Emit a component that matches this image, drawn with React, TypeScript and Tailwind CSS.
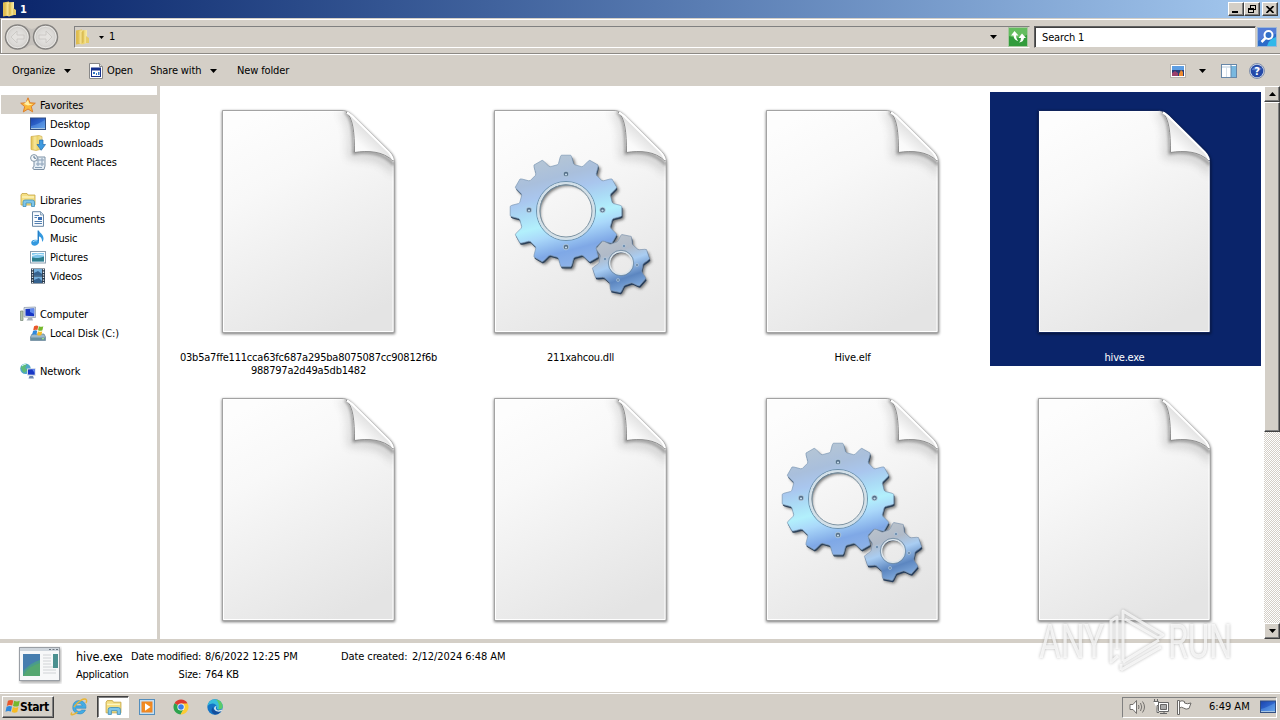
import type { ReactNode } from 'react';

const gearPath = (cx: number, cy: number, teeth: number, outer: number, root: number, offset: number) => {
  const step = (Math.PI * 2) / teeth;
  const points: string[] = [];
  for (let i = 0; i < teeth; i++) {
    const a = (offset * Math.PI) / 180 + i * step;
    [[-0.35, root], [-0.3, root + 1], [-0.2, outer - 1.5], [-0.16, outer], [0.16, outer], [0.2, outer - 1.5], [0.3, root + 1], [0.35, root]].forEach(([t, r]) => {
      points.push(`${(cx + Math.cos(a + t * step) * r).toFixed(1)} ${(cy + Math.sin(a + t * step) * r).toFixed(1)}`);
    });
  }
  return `M${points.join('L')}Z`;
};

const hole = (cx: number, cy: number, r: number) =>
  `M${cx - r} ${cy}a${r} ${r} 0 1 0 ${r * 2} 0a${r} ${r} 0 1 0 ${-r * 2} 0Z`;

const bigGear = gearPath(86, 111, 12, 56, 47, -90) + hole(86, 111, 28);
const smallGear = gearPath(141, 163.5, 6, 29, 22, -79) + hole(141, 163, 12);

const files = [
  { name: ['03b5a7ffe111cca63fc687a295ba8075087cc90812f6b', '988797a2d49a5db1482'], gears: false, selected: false },
  { name: ['211xahcou.dll'], gears: true, selected: false },
  { name: ['Hive.elf'], gears: false, selected: false },
  { name: ['hive.exe'], gears: false, selected: true },
  { name: [], gears: false, selected: false },
  { name: [], gears: false, selected: false },
  { name: [], gears: true, selected: false },
  { name: [], gears: false, selected: false },
];

const Defs = () => (
  <svg className="absolute h-0 w-0">
    <defs>
      <linearGradient id="paper" x1="0.25" y1="0" x2="0.65" y2="1">
        <stop offset="0" stopColor="#fdfdfd" />
        <stop offset="0.3" stopColor="#f8f8f8" />
        <stop offset="1" stopColor="#e4e4e4" />
      </linearGradient>
      <linearGradient id="curl" x1="0" y1="1" x2="0.6" y2="0.3">
        <stop offset="0" stopColor="#ffffff" />
        <stop offset="0.5" stopColor="#fafafa" />
        <stop offset="1" stopColor="#d4d4d4" />
      </linearGradient>
      <linearGradient id="metal" x1="0.35" y1="0" x2="0.62" y2="1">
        <stop offset="0" stopColor="#b6c6d4" />
        <stop offset="0.2" stopColor="#a9bfdc" />
        <stop offset="0.33" stopColor="#a9c6ee" />
        <stop offset="0.46" stopColor="#abdcf6" />
        <stop offset="0.58" stopColor="#b2f0fc" />
        <stop offset="0.68" stopColor="#aad8fa" />
        <stop offset="0.84" stopColor="#7fa8e6" />
        <stop offset="1" stopColor="#8fb4e8" />
      </linearGradient>
      <linearGradient id="metal2" x1="0.3" y1="0" x2="0.65" y2="1">
        <stop offset="0" stopColor="#bcc4cc" />
        <stop offset="0.3" stopColor="#b0bac8" />
        <stop offset="0.5" stopColor="#a9cdf2" />
        <stop offset="0.75" stopColor="#5c86c0" />
        <stop offset="1" stopColor="#8ab4e4" />
      </linearGradient>
      <linearGradient id="folder" x1="0" x2="1">
        <stop offset="0" stopColor="#e0bd4c" />
        <stop offset="0.35" stopColor="#f7e79a" />
        <stop offset="0.6" stopColor="#ecd36b" />
        <stop offset="1" stopColor="#f8ecac" />
      </linearGradient>
      <linearGradient id="screen" x1="0" x2="1" y2="1">
        <stop offset="0" stopColor="#1b43ac" />
        <stop offset="0.5" stopColor="#2e65cc" />
        <stop offset="1" stopColor="#69a7ec" />
      </linearGradient>
      <radialGradient id="orb">
        <stop offset="0" stopColor="#e9e8e6" />
        <stop offset="0.7" stopColor="#dad8d5" />
        <stop offset="1" stopColor="#c3c1bd" />
      </radialGradient>
      <filter id="soft" x="-20%" y="-20%" width="140%" height="140%">
        <feGaussianBlur stdDeviation="1.6" />
      </filter>
      <filter id="softer" x="-30%" y="-30%" width="160%" height="160%">
        <feGaussianBlur stdDeviation="4" />
      </filter>
      <clipPath id="page-clip">
        <path d="M14.500 10.500H133C139 10.500 142 13 146 17L180 50C184 54 186 57 186 64V232.500H14.500Z" />
      </clipPath>
    </defs>
  </svg>
);

const FileIcon = ({ gears, selected }: { gears: boolean; selected: boolean }) => (
  <svg width="200" height="250" viewBox="0 0 200 250" className="-ml-[3px] block shrink-0">
    <path d="M14 11H133C139 11 142 13 146 17L180 50C184 54 187 57 187 64V234H14Z" fill="#000" opacity="0.55" filter="url(#soft)" />
    <path d="M14.500 10.500H133C139 10.500 142 13 146 17L180 50C184 54 186 57 186 64V232.500H14.500Z" fill="url(#paper)" stroke={selected ? '#10245c' : '#a3a3a3'} />
    <path d="M15.500 11.500H133C138 11.500 141 14 145 18L179 51C183 55 185 58 185 64V231.500H15.500Z" fill="none" stroke="#fff" />
    <g clipPath="url(#page-clip)">
      <path d="M136 12C142 18 145 28 145 54C162 52 176 54 186 66V76C174 58 160 60 140 58C141 34 140 20 130 12Z" fill="#666" opacity="0.3" filter="url(#softer)" />
      <path d="M137 12C144 17 146 30 146 53C160 51 175 52 186 65" fill="none" stroke="#555" strokeWidth="2.500" opacity="0.65" filter="url(#soft)" />
    </g>
    <path d="M137 11.500C144 17 146 30 146 52.500C160 50.500 175 51 185.500 62C184 56 183 54 179 50L146 17C142 13 140 12 137 11.500Z" fill="url(#curl)" />
    <path d="M138 12C145 18 146.500 32 146.500 52.500C160 50.500 175 51 185 61" fill="none" stroke="#8c8c8c" />
    <path d="M139 12.500C142 14 144 16 147 19L178 49.500C182 53 184 56 185 60" fill="none" stroke="#fff" strokeWidth="2" />
    {gears && (
      <g fillRule="evenodd">
        <path d={bigGear} fill="#333" opacity="0.65" transform="translate(2.500 3)" filter="url(#soft)" />
        <path d={bigGear} fill="#2b4058" transform="translate(0.700 1.800)" />
        <path d={bigGear} fill="url(#metal)" stroke="#7e9ab4" strokeWidth="0.700" />
        <circle cx="86" cy="111" r="29.500" fill="none" stroke="#6d91ab" strokeWidth="1" />
        <circle cx="86" cy="111" r="27.700" fill="none" stroke="#d3e0e8" strokeWidth="2.500" />
        <circle cx="86" cy="111" r="26" fill="none" stroke="#7890a0" strokeWidth="1" />
        {[[86, 74], [122.5, 110], [86, 147], [49, 110]].map(([x, y]) => (
          <g key={`${x}-${y}`}>
            <circle cx={x} cy={y} r="2.800" fill="#56708a" stroke="#c2d8ea" strokeWidth="0.700" />
            <circle cx={x} cy={y + 0.5} r="1.100" fill="#c7dceb" />
          </g>
        ))}
        <path d={smallGear} fill="#333" opacity="0.65" transform="translate(2 3)" filter="url(#soft)" />
        <path d={smallGear} fill="#243c5b" transform="translate(0.700 1.800)" />
        <path d={smallGear} fill="url(#metal2)" stroke="#7e94ae" strokeWidth="0.700" />
        <circle cx="141" cy="163" r="11.500" fill="none" stroke="#dbe4eb" strokeWidth="1.800" />
        <circle cx="141" cy="163" r="12.700" fill="none" stroke="#5f7c97" strokeWidth="0.700" />
        {[[144, 146], [157, 165], [138, 180], [125, 159]].map(([x, y]) => (
          <circle key={`${x}-${y}`} cx={x} cy={y} r="1.500" fill="#6486a8" stroke="#cadcec" strokeWidth="0.500" />
        ))}
      </g>
    )}
  </svg>
);

const Icon = ({ children, size = 16 }: { children: ReactNode; size?: number }) => (
  <svg width={size} height={size} viewBox="0 0 16 16" className="block shrink-0">
    {children}
  </svg>
);

const FolderIcon = ({ size }: { size?: number }) => (
  <Icon size={size}>
    <path d="M1 1.500 7 .5V14.500L1 15.500Z" fill="#dfbd51" />
    <path d="M3 1.500 12 1V14L7 15.500 3 14Z" fill="url(#folder)" />
    <path d="M6.500 3 8.500 1.500V13L6.500 15.500Z" fill="#cda83a" opacity=".6" />
    <path d="M11 7 14 9V14H11Z" fill="#e6cc6a" />
  </Icon>
);

const StarIcon = () => (
  <Icon>
    <path d="M8 .8 10 5.800 15.300 6.200 11.300 9.600 12.700 14.900 8 12 3.300 14.900 4.700 9.600.7 6.200 6 5.800Z" fill="#fbb93a" stroke="#dd7f2b" />
    <path d="M8 3 9.200 6.800 13 7.200 8 8.500 4 7Z" fill="#fff0a5" />
  </Icon>
);

const DesktopIcon = () => (
  <Icon>
    <rect x=".5" y="2" width="15" height="11.500" fill="url(#screen)" stroke="#314f83" />
    <path d="M1 10C6 9 11 6 15 4V12H1Z" fill="#6ba8ec" opacity=".45" />
    <path d="M1 12.500H15" stroke="#a7c6e2" />
  </Icon>
);

const DownloadsIcon = () => (
  <Icon>
    <path d="M1 1.500 9 .5 12 1.500V14L6 15.500 1 14.500Z" fill="url(#folder)" stroke="#cfae4c" strokeWidth=".7" />
    <path d="M9.500 5H13V9.500H15.500L11.200 15.300 7 9.500H9.500Z" fill="#3e9ae0" stroke="#246bae" strokeWidth=".7" />
  </Icon>
);

const RecentIcon = () => (
  <Icon>
    <path d="M4 3H15V12L14 15.500H4C2.500 15.500 2.500 12.500 4 12.500Z" fill="#e5edf4" stroke="#7d91a5" />
    <path d="M7 5H9V7H7ZM11 5H13V7H11ZM7 9H9V11H7ZM11 9H13V11H11ZM5 13.500H12" fill="#fff" stroke="#6e8ba7" strokeWidth=".8" />
    <circle cx="4" cy="4" r="3.400" fill="#f6f9fb" stroke="#8296a8" />
    <path d="M4 2V4L6 4.300" fill="none" stroke="#54718c" />
  </Icon>
);

const LibrariesIcon = ({ size }: { size?: number }) => (
  <Icon size={size}>
    <path d="M1 3 2 1.500H7L8 3H15V13H1Z" fill="#f5df83" stroke="#c4a445" strokeWidth=".8" />
    <path d="M2 5H14" stroke="#fffbd0" />
    <path d="M3 14.500V10Q3 8 5 8H12.500Q14.500 8 14.500 10V14.500H11.500V11H6V14.500Z" fill="#7fc6ea" stroke="#428fb8" strokeWidth=".8" />
  </Icon>
);

const DocumentsIcon = () => (
  <Icon>
    <path d="M2.500.7H10.500L13.500 3.700V15.300H2.500Z" fill="#f8fbfe" stroke="#6886a4" />
    <path d="M10.500.7V4H13.500" fill="#cdddea" stroke="#6886a4" strokeWidth=".7" />
    <path d="M4.500 4.500H9M4.500 6.500H7M8 8H12M4.500 10.500H12M4.500 12.500H12" stroke="#537fb0" />
    <rect x="8" y="6" width="4" height="3" fill="#386eb4" />
  </Icon>
);

const MusicIcon = () => (
  <Icon>
    <path d="M7.500.5H9C9.500 3 13.500 4 13.500 8.500 13.500 10 13 11 12 12 12.500 8 10 6.500 9 6.500V12.500C8 16.500 1.200 16.800 1.200 12.800 1.200 9.700 5 9.200 7.500 10.200Z" fill="#3499df" />
    <path d="M3 12C4 10.500 6 10.500 7 11" fill="none" stroke="#a5dcfa" />
    <path d="M8.500 1V11" stroke="#236bb6" strokeWidth=".6" />
  </Icon>
);

const PicturesIcon = () => (
  <Icon>
    <rect x=".5" y="2.500" width="15" height="11.500" fill="#fff" stroke="#8c9eae" />
    <rect x="2" y="4" width="12" height="8.500" fill="#81c6eb" />
    <path d="M2 8.500C5 8.500 7 10 14 7.500V12.500H2Z" fill="#2e7f8d" />
    <path d="M2 6.500Q7 4 14 6" stroke="#e8f7ff" fill="none" />
  </Icon>
);

const VideosIcon = () => (
  <Icon>
    <rect x="1" y=".5" width="14" height="15" fill="#2a3b4d" />
    <path d="M4 1H12V7.500H4ZM4 8.500H12V15H4Z" fill="#73aedc" />
    <path d="M4 5 8 3 12 6V7.500H4ZM4 12 9 10 12 13V15H4Z" fill="#35628f" />
    <path d="M2.500 1V15M13.500 1V15" stroke="#e7ebef" strokeWidth="1.300" strokeDasharray="1.300 1.300" />
  </Icon>
);

const ComputerIcon = () => (
  <Icon>
    <path d="M.5 5H3V14.500H.5Z" fill="#b4c5aa" stroke="#768877" strokeWidth=".7" />
    <path d="M4 1.500 15.500 1V11.500L4 11Z" fill="#d9e0e8" stroke="#8795a9" strokeWidth=".7" />
    <path d="M5.500 3 14.200 2.500V10.200L5.500 9.800Z" fill="#1736c5" />
    <path d="M10 2.700 14.200 2.500V8L10 6Z" fill="#5e88ee" />
    <path d="M8.500 11.500H12L13 14.500H6.500Z" fill="#a7b1bd" />
  </Icon>
);

const WindowsFlag = () => (
  <>
    <path d="M3.500 1.500Q6 0 8.300 1.200L7.300 5.700Q5 4.700 2.500 6Z" fill="#e8582b" />
    <path d="M9 1.500Q11.500 2.700 14 1.500L13 6Q10.500 7.200 8 6Z" fill="#75b82c" />
    <path d="M2.300 6.800Q4.700 5.500 7.100 6.600L6.100 11Q3.700 10 1.300 11.300Z" fill="#2f89dc" />
    <path d="M7.900 7Q10.400 8.200 12.800 7L11.800 11.400Q9.400 12.600 6.900 11.400Z" fill="#f7bb22" />
  </>
);

const DiskIcon = () => (
  <Icon>
    <path d="M2 9H14L15.500 12V15.500H.5V12Z" fill="#9db8c9" stroke="#5f7e92" strokeWidth=".7" />
    <path d="M1 12.500H15V15H1Z" fill="#68909f" />
    <path d="M12 13.700H14" stroke="#a9f28b" />
    <g transform="translate(1 0) scale(.88)"><WindowsFlag /></g>
  </Icon>
);

const NetworkIcon = () => (
  <Icon>
    <circle cx="5.500" cy="5.800" r="5.300" fill="#4fa5c9" />
    <path d="M1 4Q4 0 7 1.500L5 5 8 7 4 10Q2 8 1 5Z" fill="#5dbb78" />
    <path d="M2 3Q4 1 6 1" stroke="#d7f8fa" fill="none" />
    <path d="M7 5.500 15.500 5V13L7 12.500Z" fill="#d0d8e6" />
    <path d="M8 6.500 14.700 6V11.700L8 11.500Z" fill="#1938c6" />
    <path d="M12 6.200 14.700 6V10Z" fill="#668cef" />
    <path d="M9.500 13H13L14 15.500H8.500Z" fill="#6f88b2" />
  </Icon>
);

const nav = [
  { label: 'Favorites', icon: <StarIcon />, root: true, active: true },
  { label: 'Desktop', icon: <DesktopIcon /> },
  { label: 'Downloads', icon: <DownloadsIcon /> },
  { label: 'Recent Places', icon: <RecentIcon /> },
  null,
  { label: 'Libraries', icon: <LibrariesIcon />, root: true },
  { label: 'Documents', icon: <DocumentsIcon /> },
  { label: 'Music', icon: <MusicIcon /> },
  { label: 'Pictures', icon: <PicturesIcon /> },
  { label: 'Videos', icon: <VideosIcon /> },
  null,
  { label: 'Computer', icon: <ComputerIcon />, root: true },
  { label: 'Local Disk (C:)', icon: <DiskIcon /> },
  null,
  { label: 'Network', icon: <NetworkIcon />, root: true },
];

const Arrow = ({ small, up }: { small?: boolean; up?: boolean }) => (
  <svg width={small ? 5 : 7} height={small ? 3 : 4} viewBox="0 0 7 4" className="block shrink-0">
    <path d={up ? 'M0 4H7L3.500 0Z' : 'M0 0H7L3.500 4Z'} fill="#000" />
  </svg>
);

const raised = 'border border-t-white border-l-white border-r-[#404040] border-b-[#404040] bg-[#d4cfc7] shadow-[inset_-1px_-1px_0_#808080]';

const TitleBar = () => (
  <div className="flex h-[18px] items-center bg-gradient-to-r from-[#0a246a] to-[#a6caf0] pl-[2px] pr-[2px]">
    <FolderIcon />
    <span className="ml-[2px] pt-px text-[11px] font-bold leading-[17px] text-white">1</span>
    <div className="ml-auto flex">
      <button className={`flex h-[14px] w-4 items-end pb-[2px] pl-[3px] ${raised}`}>
        <span className="block h-[2px] w-[6px] bg-black" />
      </button>
      <button className={`flex h-[14px] w-4 items-center justify-center ${raised}`}>
        <svg width="10" height="10" viewBox="0 0 10 10">
          <path d="M3 1H9V2H3ZM3 2H4V4H3ZM8 2H9V6H7V5H8ZM1 4H7V6H1ZM1 6H2V8H1ZM6 6H7V8H6ZM1 8H7V9H1Z" fill="#000" />
        </svg>
      </button>
      <button className={`ml-[2px] flex h-[14px] w-4 items-center justify-center ${raised}`}>
        <svg width="8" height="7" viewBox="0 0 8 7">
          <path d="M.5 0 7.500 7M7.500 0 .5 7" stroke="#000" strokeWidth="1.700" />
        </svg>
      </button>
    </div>
  </div>
);

const NavButtons = () => (
  <svg width="56" height="28" viewBox="0 0 56 28" className="block shrink-0">
    <path d="M14 3H42V25H14Z" fill="#c5c1bc" />
    <path d="M22 3Q28 9 34 3M22 25Q28 19 34 25" fill="#d4cfc7" />
    {[13.5, 41.5].map((x) => (
      <g key={x}>
        <circle cx={x} cy="14" r="12" fill="url(#orb)" stroke="#858380" strokeWidth="1.500" />
        <circle cx={x} cy="14" r="10.700" fill="none" stroke="#f2f1ef" strokeWidth=".8" />
      </g>
    ))}
    <path d="M7 14 13 8V12H20V16H13V20Z" fill="#e4e2df" stroke="#c6c4c0" strokeWidth=".8" />
    <path d="M48 14 42 8V12H35V16H42V20Z" fill="#e4e2df" stroke="#c6c4c0" strokeWidth=".8" />
  </svg>
);

const AddressBar = () => (
  <div className="flex h-[36px] items-center border-b border-l border-t border-[#8c8984] border-t-[#d4cfc7] pl-[3px] pr-[2px] pt-[2px] shadow-[inset_1px_1px_0_#fff]">
    <NavButtons />
    <div className="ml-[14px] flex h-[22px] flex-1 items-center border border-[#808080] border-b-white border-r-transparent">
      <FolderIcon />
      <span className="ml-[8px]"><Arrow small /></span>
      <span className="ml-[5px]">1</span>
      <span className="ml-auto mr-[11px]"><Arrow /></span>
      <svg width="20" height="20" viewBox="0 0 20 20" className="block shrink-0">
        <rect x=".5" y=".5" width="19" height="19" fill="#329c3c" stroke="#a8c7a0" />
        <path d="M1 1H19V8Q10 13 1 9Z" fill="#64bd5f" />
        <path d="M6.500 4 3 8.500H5.500Q6 13 10 14 8 11.500 8 8.500H10.500ZM14 6.500 10.500 11H13Q13 14 11 15.500 15.500 15 16 11H18Z" fill="#fff" />
      </svg>
      <span className="w-[1px]" />
    </div>
    <div className="ml-[4px] flex h-[22px] w-[222px] items-center border border-[#d4cfc7] border-l-[#606060] border-t-[#606060] bg-white pl-[7px] pt-px tracking-[-0.15px] shadow-[inset_1px_1px_0_#404040]">Search 1</div>
    <svg width="20" height="20" viewBox="0 0 20 20" className="ml-[1px] mr-px block shrink-0">
      <rect x=".5" y=".5" width="19" height="19" fill="#2c6cc9" stroke="#9cb7d7" />
      <path d="M1 1H19V7Q10 8 1 14Z" fill="#527cd6" />
      <path d="M10 19Q12 12 19 10V19Z" fill="#32b8e9" />
      <circle cx="11.500" cy="8" r="4" fill="#316fc8" stroke="#fff" strokeWidth="2" />
      <path d="M8.500 11 4.500 15" stroke="#fff" strokeWidth="2.500" />
    </svg>
  </div>
);

const Toolbar = () => (
  <div className="flex h-[32px] items-center border-t border-white pl-[12px] pr-[15px] tracking-[-0.14px]">
    <span className="w-[52px]">Organize</span>
    <Arrow />
    <svg width="16" height="16" viewBox="0 0 16 16" className="ml-[17px] mr-[3px] block shrink-0">
      <path d="M1.500.5H11.500L14.500 3.500V15.500H1.500Z" fill="#fff" stroke="#888" />
      <path d="M11.500.5V3.500H14.500" fill="#ddd" stroke="#888" />
      <rect x="3.500" y="5" width="9" height="8.500" fill="#fff" stroke="#16318c" />
      <path d="M3 5H13V7.500H3Z" fill="#16318c" />
      <path d="M5 9H7V11H5ZM8 10H9V12H8ZM10 9H11.500V12H10Z" fill="#3474c4" />
    </svg>
    <span className="w-[43px]">Open</span>
    <span className="w-[60px]">Share with</span>
    <Arrow />
    <span className="ml-[20px]">New folder</span>
    <svg width="16" height="14" viewBox="0 0 16 14" className="ml-auto mr-[13px] block">
      <rect x=".5" y=".5" width="15" height="13" fill="#fff" stroke="#b4b0ab" />
      <rect x="2" y="2" width="12" height="10" fill="#283c76" />
      <path d="M2 2H14V6H2Z" fill="#5d9ee3" />
      <path d="M2 12V9L5 7 8 9V12Z" fill="#9b3f6c" />
      <path d="M9 12V10L11 6 13 8V12Z" fill="#ed8a30" />
    </svg>
    <Arrow />
    <svg width="16" height="14" viewBox="0 0 16 14" className="ml-[15px] block">
      <rect x=".5" y=".5" width="15" height="13" fill="#fff" stroke="#6787a8" />
      <path d="M1 3H15" stroke="#b4c9db" />
      <rect x="10" y="2" width="5" height="11" fill="#79b8df" />
      <path d="M5.500 3V13" stroke="#d5e0e9" />
      <path d="M10 1V13" stroke="#6088ad" />
    </svg>
    <svg width="16" height="16" viewBox="0 0 16 16" className="ml-[12px] block">
      <circle cx="8" cy="8" r="7.500" fill="#cfd8e8" stroke="#8290ac" />
      <circle cx="8" cy="8" r="6.300" fill="#2449a8" />
      <path d="M3 6Q8 1 13 6 10 8 3 7Z" fill="#7191d5" opacity=".7" />
      <text x="8" y="12" textAnchor="middle" fontSize="11" fontWeight="bold" fill="#fff">?</text>
    </svg>
  </div>
);

const Sidebar = () => (
  <div className="w-[160px] shrink-0 border-r-[3px] border-[#d4cfc7] pl-px pt-[9px]">
    {nav.map((item, index) =>
      item ? (
        <div key={item.label} className={`flex h-[19px] items-center gap-[4px] ${item.root ? 'pl-[19px]' : 'pl-[29px]'} ${item.active ? 'bg-[#d4cfc7]' : ''}`}>
          {item.icon}
          <span className="whitespace-nowrap pt-[2px] tracking-[-0.15px]">{item.label}</span>
        </div>
      ) : (
        <div key={index} className="h-[19px]" />
      )
    )}
  </div>
);

const ScrollBar = () => (
  <div className="flex w-4 shrink-0 flex-col bg-[repeating-conic-gradient(#d4cfc7_0%_25%,#fff_0%_50%)] bg-[length:2px_2px]">
    <div className={`flex h-4 items-center justify-center ${raised}`}><Arrow up /></div>
    <div className={`h-[330px] ${raised}`} />
    <div className={`mt-auto flex h-4 items-center justify-center ${raised}`}><Arrow /></div>
  </div>
);

const FileGrid = () => (
  <div className="grid flex-1 grid-cols-[repeat(4,271px)] content-start gap-x-px gap-y-[14px] overflow-hidden pl-[14px] pt-[6px]">
    {files.map((file, index) => (
      <div key={index} className={`flex h-[274px] flex-col items-center pt-[8px] ${file.selected ? 'bg-[#0a246a] text-white' : ''}`}>
        <FileIcon gears={file.gears} selected={file.selected} />
        <div className="-ml-[2px] mt-px whitespace-nowrap text-center leading-[13px] tracking-[-0.21px]">
          {file.name.map((line) => <div key={line}>{line}</div>)}
        </div>
      </div>
    ))}
  </div>
);

const DetailsPane = () => (
  <div className="flex h-[49px] border-t-[4px] border-[#d4cfc7] bg-white">
    <svg width="44" height="38" viewBox="0 0 44 38" className="ml-[18px] mt-[3px] block shrink-0">
      <rect x="2" y="2" width="41" height="35" fill="#777" opacity=".6" filter="url(#soft)" />
      <rect x="1.500" y="1.500" width="40" height="33" fill="#f7f8f9" stroke="#9a9fa5" />
      <path d="M2 2H41V5H2Z" fill="#cfd6dd" />
      <path d="M31 3.500H33M34.500 3.500H36.500M38 3.500H40" stroke="#6d7781" />
      <rect x="5" y="8" width="17" height="22" fill="#4a9b8c" />
      <path d="M5 8H22V14Q14 16 5 25Z" fill="#477eaf" />
      <path d="M5 30Q10 20 22 17V30Z" fill="#55a770" />
      <path d="M25 9H33M25 12H33M25 15H33M25 18H33M25 21H38M25 24H38M25 27H38" stroke="#d0d3d6" />
      <rect x="35" y="8" width="5" height="14" fill="#4b9090" />
    </svg>
    <div className="ml-[14px] w-[55px] whitespace-nowrap pt-[5px] leading-[18px]">
      <div className="text-[12.500px] tracking-[-0.1px]">hive.exe</div>
      <div>Application</div>
    </div>
    <div className="grid grid-cols-[70px_140px_67px_100px] content-start gap-x-[4px] whitespace-nowrap pt-[5px] leading-[18px]">
      <span className="text-right">Date modified:</span>
      <span className="tracking-[-0.06px]">8/6/2022 12:25 PM</span>
      <span className="-ml-[8px] tracking-[-0.1px]">Date created:</span>
      <span className="-ml-[8px] tracking-[-0.06px]">2/12/2024 6:48 AM</span>
      <span className="text-right">Size:</span>
      <span>764 KB</span>
    </div>
  </div>
);

const Taskbar = () => (
  <div className="flex h-[28px] items-center border-t border-[#d4cfc7] bg-[#d4cfc7] pl-[2px] pr-[3px] shadow-[inset_0_1px_0_#fff]">
    <button className={`mt-px flex h-[22px] w-[52px] items-center pl-px text-[12px] font-bold ${raised}`}>
      <Icon size={18}><g transform="translate(0 1)"><WindowsFlag /></g></Icon>
      <span className="-ml-[2px] tracking-[-0.4px]">Start</span>
    </button>
    <svg width="18" height="18" viewBox="0 0 18 18" className="ml-[16px] block">
      <path d="M9 2.500A6.700 6.700 0 1 0 15.500 12H11.700A3.300 3.300 0 0 1 5.700 10.300H16A6.700 6.700 0 0 0 9 2.500ZM5.800 7.800A3.300 3.300 0 0 1 12.200 7.800Z" fill="#42ace5" stroke="#277fb9" strokeWidth=".5" />
      <path d="M2 14.500C-1 18 4 17 7.500 14M4 9C8 3 15-1 16.500 2 17 3 16.500 4 16 5" stroke="#e9b534" strokeWidth="1.400" fill="none" />
    </svg>
    <div className="ml-[9px] mt-px flex h-[22px] w-8 items-center justify-center border border-[#404040] border-b-white border-r-white bg-white shadow-[inset_1px_1px_0_#808080]">
      <LibrariesIcon size={17} />
    </div>
    <svg width="16" height="16" viewBox="0 0 16 16" className="ml-[10px] block">
      <rect x=".5" y=".5" width="15" height="15" fill="#c4dff2" stroke="#538ebd" />
      <rect x="2.500" y="2.500" width="11" height="11" fill="#ed8424" />
      <circle cx="8" cy="8" r="5" fill="#f28c20" />
      <path d="M6 4.300 11.500 8 6 11.700Z" fill="#fff" />
    </svg>
    <svg width="16" height="16" viewBox="0 0 16 16" className="ml-[18px] block">
      <path d="M8 8 1.500 4.200A7.500 7.500 0 0 1 14.500 4.200Z" fill="#de3b2f" />
      <path d="M8 8 1.500 4.200A7.500 7.500 0 0 0 7.500 15.500L11 9.700Z" fill="#2da34d" />
      <path d="M8 4.500H14.600A7.500 7.500 0 0 1 7.500 15.500L11 9.500Z" fill="#fccc34" />
      <circle cx="8" cy="8" r="3.600" fill="#fff" />
      <circle cx="8" cy="8" r="2.800" fill="#3b7ee8" />
    </svg>
    <svg width="16" height="16" viewBox="0 0 16 16" className="ml-[18px] block">
      <circle cx="8" cy="8" r="7.700" fill="#1475c6" />
      <path d="M.5 7Q2 0 8 .3 15 1 15.700 7.500 15.500 10.500 11.500 10.500 9 10 10 8 9 4.500 5.500 4.500 2 4.500.5 7Z" fill="#38bddb" />
      <path d="M9 .5Q15 1 15.700 7.500 15.500 10.500 11.500 10.500 13 4 9 .5Z" fill="#5bcb69" />
      <path d="M6 8Q6 13.500 14.500 12 11 16 7 15.300 2.500 12 6 8Z" fill="#144f9d" />
      <path d="M9.500 7Q7.500 10 11 11.500L15 10.500V12Q9 14 7 10 7 7 9.500 7Z" fill="#d4e4ec" />
    </svg>
    <div className="ml-auto mt-px flex h-[21px] w-[155px] items-center border border-[#808080] border-b-white border-r-white pl-[6px]">
      <svg width="17" height="16" viewBox="0 0 17 16" className="block" fill="none" stroke="#73706d">
        <path d="M1 5.500H4L7.500 1.500V14.500L4 10.500H1Z" fill="#fff" />
        <path d="M9.500 6Q10.500 8 9.500 10M11.500 4Q14 8 11.500 12M13.500 2.500Q17.500 8 13.500 13.500" />
      </svg>
      <svg width="16" height="16" viewBox="0 0 16 16" className="ml-[7px] block" stroke="#666" fill="#fff">
        <path d="M5.500 3.500H15.500V12.500H5.500Z" /><path d="M7.500 5.500H13.500V10.500H7.500Z" fill="#aaa" />
        <path d="M7 14.500H14M11 12.500V14.500M.5 2.500H5.500V6.500H4V13.500H6" /><path d="M1.500 0V3M4.500 0V3" />
      </svg>
      <svg width="16" height="16" viewBox="0 0 16 16" className="ml-[7px] block" stroke="#6b6966" fill="#fff">
        <path d="M1.500 1.500H3.500V15.500H1.500Z" />
        <path d="M3.500 2.500Q6 1 8.500 2.500V4Q11 5.500 15 4L13 9.500Q10 11 7.500 9 5.500 7.500 3.500 9Z" />
      </svg>
      <span className="ml-[17px] w-[42px] whitespace-nowrap tracking-[0px]">6:49 AM</span>
      <span className="ml-auto"><DesktopIcon /></span>
    </div>
  </div>
);

const Watermark = () => (
  <svg width="220" height="84" viewBox="0 0 220 84" className="pointer-events-none absolute left-[1030px] top-[604px] overflow-visible">
    {['#777', '#fff'].map((color, layer) => (
      <g key={color} opacity={layer ? 0.75 : 0.5} filter={layer ? undefined : 'url(#soft)'}>
        <text x="9" y="54" fontFamily="Roboto" fontSize="48" textLength="65" lengthAdjust="spacingAndGlyphs" fill={color}>ANY</text>
        <text x="138" y="54" fontFamily="Roboto" fontSize="48" textLength="64" lengthAdjust="spacingAndGlyphs" fill={color}>RUN</text>
        <path d="M88 52 81 58V17L87 13V45M93 57V7L133 31 128 34 95 15M93 58 129 36M91 66 131 43M91 60V66" fill="none" stroke={color} strokeWidth="3" strokeLinejoin="round" />
      </g>
    ))}
  </svg>
);

const App = () => (
  <div className="relative flex h-[720px] w-[1280px] flex-col overflow-hidden bg-[#d4cfc7] font-['DejaVu_Sans_Condensed','DejaVu_Sans',sans-serif] text-[11px] leading-[14px] tracking-[-0.25px] text-black">
    <Defs />
    <TitleBar />
    <AddressBar />
    <Toolbar />
    <div className="flex h-[553px] bg-white">
      <Sidebar />
      <FileGrid />
      <ScrollBar />
    </div>
    <DetailsPane />
    <div className="h-[4px] bg-white" />
    <Taskbar />
    <Watermark />
  </div>
);

export default App;
